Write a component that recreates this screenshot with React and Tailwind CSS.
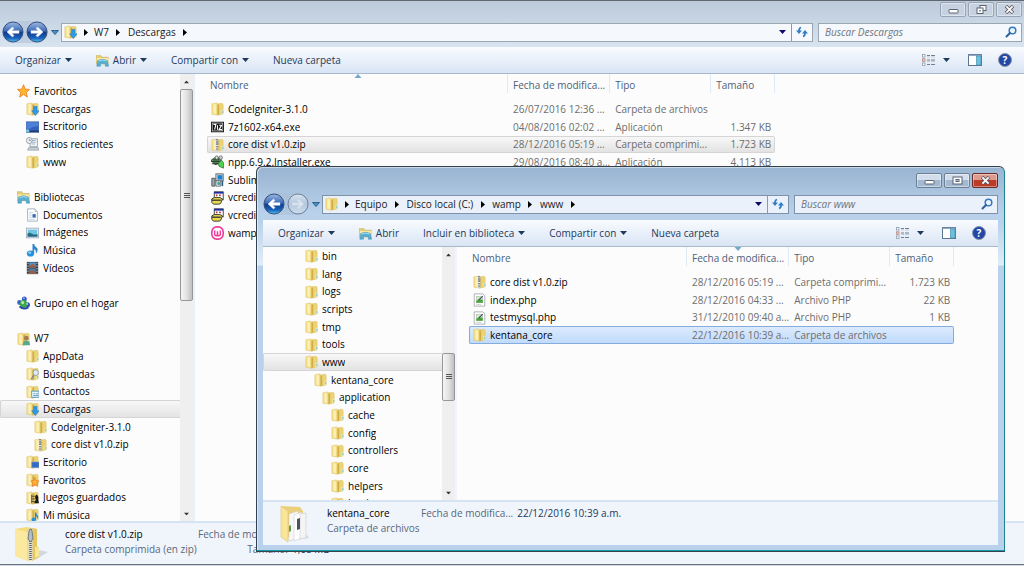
import { useState } from "react";

const icons = {
  folder: (
    <>
      <path d="M1 2 L7 1 L8 3 V15 L1 14 Z" fill="#f3dc84" stroke="#dcc06a" strokeWidth=".5" />
      <path d="M3 2 L6 3 V14 L3 13 Z" fill="#fbf0b8" />
      <path d="M8 2 L14 1.500 L15 3 V13 L14 14 L8 15 Z" fill="#ecd373" stroke="#d9bc60" strokeWidth=".5" />
      <path d="M8 3 L10 2.500 V14 L8 15 Z" fill="#cfae4a" />
      <path d="M13 9 H15.500 V14 H13 Z" fill="#eef0c6" />
      <path d="M14.500 10 V13" stroke="#4fa3a0" strokeWidth=".8" />
    </>
  ),
  star: (
    <path
      d="M8 .8 L10 5.800 L15.500 6.200 L11.400 9.700 L12.800 15 L8 12 L3.200 15 L4.600 9.700 L.5 6.200 L6 5.800 Z"
      fill="#ffb52c"
      stroke="#e8832a"
      strokeWidth="1"
    />
  ),
  desktop: (
    <>
      <rect x="0" y="2" width="16" height="12" fill="#3562bd" stroke="#6b86ac" strokeWidth=".8" />
      <path d="M.5 2.500 H15 V7 Q7 7 1 12 Z" fill="#5f96e6" opacity=".6" />
      <path d="M0 12 H16 V14 H0 Z" fill="#1d3c6f" />
      <rect x="0" y="11" width="4" height="3" fill="#76c1dd" />
    </>
  ),
  recent: (
    <>
      <path d="M5 2 H14 V11 H5 Z" fill="#f4f6f8" stroke="#8f9aa5" />
      <path d="M7 4 H12 M7 6 H12 M7 8 H11" stroke="#8ba8c4" />
      <path d="M3 12 H15 L16 15 H2 Z" fill="#c6cdd4" stroke="#8c969f" strokeWidth=".7" />
      <circle cx="4" cy="4" r="3.500" fill="#eff3f6" stroke="#8b949c" />
      <path d="M4 2 V4 H6" stroke="#53779a" fill="none" strokeWidth=".8" />
    </>
  ),
  library: (
    <>
      <path d="M0 2 H6 L7 4 H15 V12 H0 Z" fill="#e8cf73" stroke="#c6a94c" strokeWidth=".7" />
      <path d="M1 5 H15 L16 13 H1 Z" fill="#f8eba9" />
      <path d="M2 8 Q8 5 14 8 L15.500 15 H11.500 V12 H5.500 V15 H1 Z" fill="#58aed2" stroke="#3b8eb5" strokeWidth=".6" />
      <path d="M3 8.500 Q8 6.500 13 8.500" stroke="#bde6f3" fill="none" />
    </>
  ),
  document: (
    <>
      <path d="M2 1 H11 L14 4 V15 H2 Z" fill="#fff" stroke="#9aa8b5" />
      <path d="M11 1 V4 H14" fill="#dfe7ee" stroke="#9aa8b5" strokeWidth=".7" />
      <path d="M4 5 H9 M4 7 H7 M4 9 H7 M4 11 H7 M4 13 H11" stroke="#b0c4d9" strokeWidth=".8" />
      <rect x="8" y="7" width="4" height="4" fill="#3b6bb4" />
    </>
  ),
  picture: (
    <>
      <rect x=".5" y="2.500" width="15" height="11" fill="#fff" stroke="#9aa8b5" />
      <rect x="2" y="4" width="12" height="8" fill="#71c4e3" />
      <path d="M2 8 Q5 7 8 9 T14 9 V12 H2 Z" fill="#237c78" />
      <path d="M2 10 H14 V12 H2 Z" fill="#2d5f93" />
    </>
  ),
  music: (
    <>
      <ellipse cx="5.500" cy="12" rx="4.500" ry="3.500" fill="#2793dd" />
      <path d="M8 1 H10 Q10 4 14 6 Q15 10 12 12 Q13 8 10 7 V12 H8 Z" fill="#2b86cd" />
      <ellipse cx="4.500" cy="11" rx="2" ry="1.200" fill="#8dd3fa" />
    </>
  ),
  video: (
    <>
      <rect x="1" y="1" width="14" height="14" fill="#3a3f45" />
      <rect x="4" y="1.500" width="8" height="6" fill="#4e93c9" />
      <rect x="4" y="8.500" width="8" height="6" fill="#4c7fa8" />
      <path d="M4 6 L8 3 L12 6 V7.500 H4 Z M4 13 L7 10 L12 13 V14.500 H4 Z" fill="#a35b45" />
      <path d="M2.500 2 V15 M13.500 2 V15" stroke="#dbe5eb" strokeDasharray="1.500 1.500" />
    </>
  ),
  homegroup: (
    <>
      <circle cx="3" cy="7.500" r="2.800" fill="#3b63cf" />
      <circle cx="9" cy="3.500" r="3" fill="#2f58c5" />
      <circle cx="13" cy="10" r="3" fill="#3157bd" />
      <circle cx="8" cy="9" r="4.500" fill="#3da946" />
      <circle cx="7" cy="7.500" r="1.800" fill="#b8ecac" />
      <circle cx="12.500" cy="9" r="1.200" fill="#a9c3f8" />
      <circle cx="8.500" cy="2.500" r="1" fill="#a9c3f8" />
      <path d="M3 12 Q8 16 14 13" stroke="#2948a8" strokeWidth="2" fill="none" />
    </>
  ),
  sevenZip: (
    <>
      <rect x="0" y="2" width="16" height="12" fill="#111" />
      <rect x="1.500" y="3.500" width="13" height="9" fill="none" stroke="#e6e6e6" strokeWidth=".8" />
      <path d="M3 5 H6 L4.500 11 M8 6 V11 M10 6 H13 L10 11 H13.500" stroke="#fff" strokeWidth="1.400" fill="none" />
    </>
  ),
  npp: (
    <>
      <path d="M0 6 L5 3 L12 4 L12 9 L5 11 Z" fill="#568d5b" stroke="#29462d" />
      <path d="M0 7.500 H11 M1 10 H9 M3 5.500 H10" stroke="#202b20" />
      <circle cx="7" cy="3" r="2" fill="#d8dfd6" stroke="#444" strokeWidth=".8" />
      <circle cx="12" cy="3" r="2" fill="#d8dfd6" stroke="#444" strokeWidth=".8" />
      <path d="M9 9 L13 6 L15.500 9 V15 L10 13 Z" fill="#50d450" stroke="#26662c" strokeWidth=".8" />
    </>
  ),
  installer: (
    <>
      <rect x="6" y="1" width="9" height="8" fill="#d7dadf" stroke="#55585c" />
      <rect x="8" y="2.500" width="6" height="5" fill="#1683d1" />
      <path d="M1 6 H5 V15 H1 Z" fill="#9ba3ab" stroke="#4c5359" />
      <path d="M6 9 H12 V15 H6 Z" fill="#f2f2f2" stroke="#5d6266" />
      <circle cx="9.500" cy="12" r="2" fill="#39b09d" />
      <path d="M14 9 V15" stroke="#365a87" strokeWidth="2" />
    </>
  ),
  vcredist: (
    <>
      <rect x="4" y="1" width="11" height="9" fill="#fff" stroke="#222" />
      <path d="M4 2 H15" stroke="#1c2ca3" strokeWidth="2" />
      <path d="M6 5 H8 M10 5 H12" stroke="#b33" strokeWidth="2" />
      <path d="M1 9 L4 7.500 H11 L14 9 L12 14 L10 15 H3 L1 13 Z" fill="#e9d94c" stroke="#222" />
      <path d="M1 10.500 H12" stroke="#333" strokeWidth="1.500" />
    </>
  ),
  wamp: (
    <>
      <rect x="1" y="1" width="14" height="14" rx="6" fill="#fff" stroke="#ee3d9b" strokeWidth="2" />
      <path d="M4.500 5 V9 Q4.500 11 6.300 11 Q8 11 8 9 V6 V9 Q8 11 9.700 11 Q11.500 11 11.500 9 V5" stroke="#ee3d9b" strokeWidth="1.800" fill="none" />
    </>
  ),
  php: (
    <>
      <path d="M1.500 1 H12 L14.500 3 V15 H1.500 Z" fill="#fff" stroke="#a0a6ac" />
      <rect x="4" y="4" width="8" height="7" fill="#d9e9cf" stroke="#9eb58e" strokeWidth=".6" />
      <path d="M4 9 Q7 6 12 8 V11 H4 Z" fill="#4ba33d" />
      <path d="M7 8 L12 3.500" stroke="#3b4a6b" strokeWidth="1.200" />
      <path d="M4 13 H10" stroke="#b3b9bf" strokeWidth=".8" />
    </>
  ),
};

// small emblems drawn over the plain folder
const overlays = {
  zip: (
    <>
      <path d="M7.500 1 V15" stroke="#e9edf0" strokeWidth="3" />
      <path d="M7.500 1 V15" stroke="#5d666e" strokeWidth="2.500" strokeDasharray="1 1" />
      <rect x="6.500" y="3" width="2.500" height="4" fill="#8f9aa3" />
    </>
  ),
  downloads: <path d="M9.500 5 H13.500 V10 H16 L11.500 15.500 L7 10 H9.500 Z" fill="#2f9bea" stroke="#1b6fb8" strokeWidth=".6" />,
  user: (
    <>
      <circle cx="11.500" cy="7" r="2.800" fill="#a67a58" />
      <path d="M7 15 Q7 10 11.500 10 Q16 10 16 15 Z" fill="#5aa88e" />
    </>
  ),
  search: (
    <>
      <path d="M10 9 L6.500 14" stroke="#7f8a94" strokeWidth="1.800" />
      <circle cx="12" cy="6.500" r="3.300" fill="#d9ecf7" stroke="#8b98a3" />
    </>
  ),
  contacts: (
    <>
      <rect x="7" y="7" width="9" height="7" fill="#eaf5fb" stroke="#4d95bd" />
      <path d="M9 10 H11 M12 10 H15 M9 12 H15" stroke="#4d95bd" />
    </>
  ),
  desktop: <path d="M7 8 H16 V14.500 H7 Z" fill="#3169c3" stroke="#7d9cc4" strokeWidth=".8" />,
  star: <path d="M11 5 L12.500 8.500 L16 9 L13.500 11.500 L14.500 15.500 L11 13.500 L7.500 15.500 L8.500 11.500 L6 9 L9.500 8.500 Z" fill="#ffae2d" stroke="#e36d2a" strokeWidth=".7" />,
  games: (
    <>
      <path d="M7 4 V14 M7 6 H11 M7 9 H11 M7 12 H11" stroke="#4a4630" />
      <path d="M13 4 Q16 6 15 10 L16 14 H10 L12 10 Q10 6 13 4 Z" fill="#16181c" />
    </>
  ),
  music: (
    <>
      <ellipse cx="9.500" cy="13" rx="2.700" ry="2.200" fill="#2793dd" />
      <path d="M11 5 H12.500 Q13 8 15 9 Q15.500 11 14 12 Q14 10 12.500 9.500 V13 H11 Z" fill="#2b86cd" />
    </>
  ),
};

function Icon({ name, overlay, className = "h-3.5 w-[13px]" }) {
  return (
    <svg viewBox="0 0 16 16" preserveAspectRatio="none" className={`shrink-0 ${className}`} aria-hidden="true">
      {icons[name] || icons.folder}
      {overlay && overlays[overlay]}
    </svg>
  );
}

function Caret({ className = "text-[#1e395b]" }) {
  return (
    <svg viewBox="0 0 7 4" className={`h-1 w-[7px] shrink-0 ${className}`} aria-hidden="true">
      <path d="M0 0 H7 L3.500 4 Z" fill="currentColor" />
    </svg>
  );
}

function NavButton({ label, forward, disabled }) {
  return (
    <button type="button" aria-label={label} disabled={disabled} className="h-[22px] w-[22px]">
      <svg viewBox="0 0 22 22" className="h-full w-full">
        <defs>
          <linearGradient id="navOn" x1="0" y1="0" x2="0" y2="1">
            <stop offset="0" stopColor="#9db9e2" />
            <stop offset=".46" stopColor="#3a69b4" />
            <stop offset=".5" stopColor="#0f3a88" />
            <stop offset=".8" stopColor="#1a62bd" />
            <stop offset="1" stopColor="#4fc6f3" />
          </linearGradient>
          <linearGradient id="navOff" x1="0" y1="0" x2="0" y2="1">
            <stop offset="0" stopColor="#d7e3f0" />
            <stop offset=".5" stopColor="#b4c7dd" />
            <stop offset="1" stopColor="#cfdeee" />
          </linearGradient>
        </defs>
        <circle cx="11" cy="11" r="10" fill={disabled ? "url(#navOff)" : "url(#navOn)"} stroke={disabled ? "#71849b" : "#35507f"} strokeWidth="1" />
        <g transform={forward ? "rotate(180 11 11)" : undefined}>
          <path
            d="M5 11 L10.500 6 L12 7.500 L9.800 9.700 H17 V12.300 H9.800 L12 14.500 L10.500 16 Z"
            fill={disabled ? "#dbe5f0" : "#fff"}
            stroke={disabled ? "#c2d0e0" : "#dfe9f6"}
            strokeWidth=".5"
          />
        </g>
      </svg>
    </button>
  );
}

function WindowButtons({ active }) {
  const look = active
    ? "border-[#6c7f95] bg-linear-to-b from-[#d2deeb] from-45% to-[#a3b9d1] to-50%"
    : "border-[#98a4b3] bg-[#c6d2e0]";
  const close = active ? "border-[#692a2c] bg-linear-to-b from-[#dc9b8e] from-45% to-[#bd3b25] to-50%" : look;
  const base = "flex h-[15px] w-[26px] items-center justify-center rounded-xs border shadow-[inset_0_0_0_1px_rgba(255,255,255,0.4)]";
  return (
    <div className="flex justify-end gap-0.5">
      <button type="button" aria-label="Minimizar" className={`${base} ${look}`}>
        <svg viewBox="0 0 11 9" className="h-[9px] w-[11px]">
          <rect x="1" y="4.500" width="9" height="3.500" rx=".5" fill="#fff" stroke="#5b6270" />
        </svg>
      </button>
      <button type="button" aria-label="Restaurar" className={`${base} ${look}`}>
        <svg viewBox="0 0 11 9" className="h-[9px] w-[11px]">
          {active ? (
            <>
              <rect x="1" y="1" width="9" height="7" fill="#fff" stroke="#5b6270" />
              <rect x="4" y="3.500" width="3" height="2" fill="#a3b9d1" stroke="#5b6270" />
            </>
          ) : (
            <>
              <rect x="4" y=".5" width="6" height="5" fill="#fff" stroke="#5b6270" />
              <rect x="1" y="3" width="6" height="5.500" fill="#fff" stroke="#5b6270" />
              <rect x="3" y="5" width="2" height="1.500" fill="#8995a5" />
            </>
          )}
        </svg>
      </button>
      <button type="button" aria-label="Cerrar" className={`${base} ${close}`}>
        <svg viewBox="0 0 11 9" className="h-[9px] w-[11px]">
          <path d="M2 1 L9 8 M9 1 L2 8" stroke="#5b5460" strokeWidth="3.400" />
          <path d="M2.400 1.400 L8.600 7.600 M8.600 1.400 L2.400 7.600" stroke="#fff" strokeWidth="1.800" />
        </svg>
      </button>
    </div>
  );
}

function Arrow() {
  return (
    <svg viewBox="0 0 4 7" className="h-[7px] w-1" aria-hidden="true">
      <path d="M0 0 L4 3.500 L0 7 Z" fill="#000" />
    </svg>
  );
}

function AddressBar({ path, overlay, placeholder, active }) {
  const [query, setQuery] = useState("");
  const box = active ? "border-[#7f92a8] bg-[#eaf1fa]" : "border-[#9ba6b2] bg-[#f5f8fc]";
  return (
    <div className="flex items-center">
      <div className="flex items-center gap-0.5 rounded-full bg-[#a9bdd4]/50">
        <NavButton label="Atrás" />
        <NavButton label="Adelante" forward disabled={active} />
      </div>
      <button type="button" aria-label="Ubicaciones recientes" className="flex h-[18px] w-[13px] items-center justify-center">
        <svg viewBox="0 0 8 5" className="h-[5px] w-2">
          <path d="M.5 .5 H7.500 L4 4.500 Z" fill="#3f95c9" stroke="#1f4f7d" strokeWidth=".8" />
        </svg>
      </button>
      <div className={`flex h-[19px] min-w-0 flex-1 items-center border pl-0.5 ${box}`}>
        <Icon name="folder" overlay={overlay} />
        <ol className="flex items-center">
          <li className="flex w-[17px] justify-center">
            <Arrow />
          </li>
          {path.map((p) => (
            <li key={p} className="flex items-center">
              <button type="button">{p}</button>
              <span className="flex w-[19px] justify-center">
                <Arrow />
              </span>
            </li>
          ))}
        </ol>
        <button type="button" aria-label="Ubicaciones anteriores" className="ml-auto flex h-full w-[17px] items-center justify-center">
          <Caret className="text-[#0b0b6b]" />
        </button>
        <button type="button" aria-label="Actualizar" className="flex h-full w-[21px] items-center justify-center border-l border-[#8e9aa8]">
          <svg viewBox="0 0 12 12" className="h-3 w-3">
            <path d="M5 1.500 Q3 2 3 5 M7 10.500 Q9 10 9 7" stroke="#2f7fc6" strokeWidth="1.800" fill="none" />
            <path d="M0 4.500 H6 L3 8 Z M6 7.500 H12 L9 4 Z" fill="#2f7fc6" />
          </svg>
        </button>
      </div>
      <label className={`ml-[5px] flex h-[19px] w-[204px] items-center border pr-1 pl-1.5 ${box}`}>
        <input
          type="search"
          aria-label={placeholder}
          placeholder={placeholder}
          value={query}
          onChange={(e) => setQuery(e.target.value)}
          className="w-full min-w-0 bg-transparent outline-none placeholder:text-[#6f757c] placeholder:italic"
        />
        <svg viewBox="0 0 12 12" className="h-3 w-3 shrink-0" aria-hidden="true">
          <circle cx="7.500" cy="4.500" r="3.300" fill="#e8f3fc" stroke="#3579bd" strokeWidth="1.500" />
          <path d="M5 7 L1.500 10.500" stroke="#2c5f9d" strokeWidth="2" strokeLinecap="round" />
        </svg>
      </label>
    </div>
  );
}

function Toolbar({ items }) {
  return (
    <div className="flex h-[27px] shrink-0 items-center gap-6 border-b border-[#a9b9cc] bg-linear-to-b from-[#f9fbfe] via-[#e9f0fa] to-[#d9e5f4] pr-3 pl-[15px] text-[#1e395b]">
      {items.map((item) => (
        <button key={item.label} type="button" className="flex items-center whitespace-nowrap">
          {item.icon && <Icon name={item.icon} className="mr-1 h-[13px] w-[13px]" />}
          {item.label}
          {item.menu && <Caret className="ml-1 text-[#1e395b]" />}
        </button>
      ))}
      <div className="ml-auto flex items-center">
        <button type="button" aria-label="Cambiar la vista" className="flex items-center gap-2">
          <svg viewBox="0 0 13 12" className="h-3 w-[13px]">
            <path d="M5 1.500 H8 M9 1.500 H13 M5 6 H8 M9 6 H13 M5 10.500 H8 M9 10.500 H13" stroke="#6e7f92" />
            <path d="M5 3 H8 M9 3 H13 M5 7.500 H8 M9 7.500 H13" stroke="#c2ccd7" />
            <rect x=".5" y=".5" width="2.500" height="2.500" fill="#fff" stroke="#8d9cac" strokeWidth=".8" />
            <rect x=".5" y="4.800" width="2.500" height="2.500" fill="#f0c9bf" stroke="#b08b83" strokeWidth=".8" />
            <rect x=".5" y="9" width="2.500" height="2.500" fill="#fff" stroke="#8d9cac" strokeWidth=".8" />
          </svg>
          <Caret />
        </button>
        <button type="button" aria-label="Panel de vista previa" className="ml-[18px]">
          <svg viewBox="0 0 14 12" className="h-3 w-3.5">
            <rect x=".5" y=".5" width="13" height="11" fill="#fff" stroke="#5b7490" />
            <path d="M0 1 H14" stroke="#6f8aa7" strokeWidth="1.500" />
            <rect x="8.500" y="2" width="4.500" height="9" fill="#6cc2dc" stroke="#4a92b4" strokeWidth=".7" />
          </svg>
        </button>
        <button type="button" aria-label="Ayuda" className="ml-4 flex h-3.5 w-3.5 items-center justify-center rounded-full border border-[#8b94a6] bg-[#2347a6] text-[10px] leading-none font-bold text-white">
          ?
        </button>
      </div>
    </div>
  );
}

const indents = ["pl-4", "pl-[25px]", "pl-[33px]", "pl-[41px]", "pl-[50px]", "pl-[58px]", "pl-[67px]"];

function Tree({ nodes }) {
  return (
    <ul className="min-w-0 flex-1 overflow-hidden">
      {nodes.map((n, i) => (
        <li key={i} className="h-[18px] nth-[3n]:h-[17px]">
          {n && (
            <a
              href="#"
              className={`flex h-full items-center gap-1 rounded-l-xs border border-r-0 text-black ${indents[n.level]} ${
                n.selected ? "border-[#d5d5d5] bg-linear-to-b from-[#f8f8f8] to-[#e3e3e3]" : "border-transparent"
              }`}
            >
              <Icon name={n.icon} overlay={n.overlay} />
              <span className="truncate">{n.label}</span>
            </a>
          )}
        </li>
      ))}
    </ul>
  );
}

function Scrollbar({ thumb }) {
  return (
    <div className="flex w-[13px] shrink-0 flex-col bg-[#efefef]">
      <button type="button" aria-label="Subir" className="flex h-[15px] items-center justify-center">
        <Caret className="rotate-180 scale-75 text-[#333]" />
      </button>
      <div className="flex flex-1 flex-col">
        <div className={thumb.before} />
        <div className={`flex flex-col items-center justify-center gap-px rounded-xs border border-[#979797] bg-linear-to-r from-[#f5f5f5] via-[#e3e3e3] to-[#bfbfbf] ${thumb.size}`}>
          <i className="h-px w-1.5 bg-[#555]" />
          <i className="h-px w-1.5 bg-[#555]" />
          <i className="h-px w-1.5 bg-[#555]" />
        </div>
        <div className={thumb.after} />
      </div>
      <button type="button" aria-label="Bajar" className="flex h-[15px] items-center justify-center">
        <Caret className="scale-75 text-[#333]" />
      </button>
    </div>
  );
}

function FileTable({ files, widths, sort, descending }) {
  const cols = ["Nombre", "Fecha de modifica...", "Tipo", "Tamaño"];
  const tones = {
    gray: "border-[#d5d5d5] bg-linear-to-b from-[#f8f8f8] to-[#e2e2e2]",
    blue: "border-[#84acdd] bg-linear-to-b from-[#dceafc] to-[#c1dbfc]",
  };
  return (
    <table className="table-fixed border-separate border-spacing-0 self-start text-[#6d6d6d]">
      <colgroup>
        {widths.map((w, i) => (
          <col key={i} className={w} />
        ))}
      </colgroup>
      <thead>
        <tr className="h-[26px] text-left align-top text-[#4c607a]">
          {cols.map((c, i) => (
            <th key={c} scope="col" className="relative p-0 font-normal">
              <div className={`flex h-[19px] items-end border-r border-[#dfeaf6] ${i === 0 ? "pl-[3px]" : "pl-[5px]"}`}>{c}</div>
              {sort === i && (
                <Caret className={`absolute top-0 left-1/2 -translate-x-1/2 text-[#6fa9cc] ${descending ? "" : "rotate-180"}`} />
              )}
            </th>
          ))}
        </tr>
      </thead>
      <tbody>
        {files.map((f, i) => {
          const tone = f.selected ? tones[f.selected] : "border-transparent";
          return (
            <tr key={i} className="h-[18px] nth-[3n]:h-[17px]">
              <td className={`rounded-l-xs border-y border-l p-0 pl-[3px] ${tone}`}>
                <div className="flex items-center gap-1 text-black">
                  <Icon name={f.icon} overlay={f.overlay} />
                  <span className="truncate">{f.name}</span>
                </div>
              </td>
              <td className={`border-y p-0 pl-[5px] ${tone}`}>{f.date}</td>
              <td className={`border-y p-0 pl-[5px] ${tone}`}>{f.type}</td>
              <td className={`rounded-r-xs border-y border-r p-0 pr-[3px] text-right ${tone}`}>{f.size}</td>
            </tr>
          );
        })}
      </tbody>
    </table>
  );
}

const treeMain = [
  { label: "Favoritos", level: 0, icon: "star" },
  { label: "Descargas", level: 1, overlay: "downloads" },
  { label: "Escritorio", level: 1, icon: "desktop" },
  { label: "Sitios recientes", level: 1, icon: "recent" },
  { label: "www", level: 1 },
  null,
  { label: "Bibliotecas", level: 0, icon: "library" },
  { label: "Documentos", level: 1, icon: "document" },
  { label: "Imágenes", level: 1, icon: "picture" },
  { label: "Música", level: 1, icon: "music" },
  { label: "Vídeos", level: 1, icon: "video" },
  null,
  { label: "Grupo en el hogar", level: 0, icon: "homegroup" },
  null,
  { label: "W7", level: 0, overlay: "user" },
  { label: "AppData", level: 1 },
  { label: "Búsquedas", level: 1, overlay: "search" },
  { label: "Contactos", level: 1, overlay: "contacts" },
  { label: "Descargas", level: 1, overlay: "downloads", selected: true },
  { label: "CodeIgniter-3.1.0", level: 2 },
  { label: "core dist v1.0.zip", level: 2, overlay: "zip" },
  { label: "Escritorio", level: 1, overlay: "desktop" },
  { label: "Favoritos", level: 1, overlay: "star" },
  { label: "Juegos guardados", level: 1, overlay: "games" },
  { label: "Mi música", level: 1, overlay: "music" },
];

const treeWww = [
  { label: "bin", level: 3 },
  { label: "lang", level: 3 },
  { label: "logs", level: 3 },
  { label: "scripts", level: 3 },
  { label: "tmp", level: 3 },
  { label: "tools", level: 3 },
  { label: "www", level: 3, selected: true },
  { label: "kentana_core", level: 4 },
  { label: "application", level: 5 },
  { label: "cache", level: 6 },
  { label: "config", level: 6 },
  { label: "controllers", level: 6 },
  { label: "core", level: 6 },
  { label: "helpers", level: 6 },
  { label: "hooks", level: 6 },
];

const filesMain = [
  { name: "CodeIgniter-3.1.0", date: "26/07/2016 12:36 ...", type: "Carpeta de archivos" },
  { name: "7z1602-x64.exe", icon: "sevenZip", date: "04/08/2016 02:02 ...", type: "Aplicación", size: "1.347 KB" },
  { name: "core dist v1.0.zip", overlay: "zip", date: "28/12/2016 05:19 ...", type: "Carpeta comprimi...", size: "1.723 KB", selected: "gray" },
  { name: "npp.6.9.2.Installer.exe", icon: "npp", date: "29/08/2016 08:40 a...", type: "Aplicación", size: "4.113 KB" },
  { name: "Sublim", icon: "installer" },
  { name: "vcredis", icon: "vcredist" },
  { name: "vcredis", icon: "vcredist" },
  { name: "wamp", icon: "wamp" },
];

const filesWww = [
  { name: "core dist v1.0.zip", overlay: "zip", date: "28/12/2016 05:19 ...", type: "Carpeta comprimi...", size: "1.723 KB" },
  { name: "index.php", icon: "php", date: "28/12/2016 04:33 ...", type: "Archivo PHP", size: "22 KB" },
  { name: "testmysql.php", icon: "php", date: "31/12/2010 09:40 a...", type: "Archivo PHP", size: "1 KB" },
  { name: "kentana_core", date: "22/12/2016 10:39 a...", type: "Carpeta de archivos", selected: "blue" },
];

function ZipLarge() {
  return (
    <svg viewBox="0 0 33 36" className="h-9 w-[33px] shrink-0" aria-hidden="true">
      <path d="M20 34 L33 26 L24 24 Z" fill="#d3d8df" />
      <path d="M0 3 L12 1 L22 3 V32 L14 35 L0 30 Z" fill="#f4dc7c" />
      <path d="M0 3 L12 6 V35 L0 30 Z" fill="#fae99f" />
      <path d="M16 2 L22 3 V20 L24 22 V31 L17 35 Z" fill="#e5c75c" />
      <path d="M20 21 Q24 20 24 24 V30 L20 32 Z" fill="#f7e59b" />
      <path d="M15.500 3 V34" stroke="#d8dde2" strokeWidth="4" />
      <path d="M15.500 3 V34" stroke="#5f666d" strokeWidth="2.500" strokeDasharray="1 1" />
      <path d="M14 5 Q15.500 1 17 5 L18 13 L15.500 16 L13 13 Z" fill="#b5bec6" stroke="#5f6a74" strokeWidth=".8" />
    </svg>
  );
}

function FolderLarge() {
  return (
    <svg viewBox="0 0 30 38" className="h-[38px] w-[30px] shrink-0" aria-hidden="true">
      <path d="M8 36 L29 33 L27 30 Z" fill="#d7dbe1" />
      <path d="M1 1 L20 2 L23 6 V30 L8 32 Z" fill="#ead07a" />
      <path d="M9 9 L18 6 V33 L9 36 Z" fill="#f7f7f7" stroke="#c9ccd0" strokeWidth=".5" />
      <path d="M14 10 L22 7 V33 L14 36 Z" fill="#fff" stroke="#c2c5c9" strokeWidth=".5" />
      <path d="M20 9 L26 8 V33 L20 34 Z" fill="#f4f4f4" stroke="#c2c5c9" strokeWidth=".5" />
      <path d="M17 14 L20 13 V24 L17 25 Z" fill="#4d5358" />
      <path d="M9 21 L11 20 V26 L9 27 Z" fill="#67a04b" />
      <path d="M1 1 L8 6 V37 L1 32 Z" fill="#f8e596" stroke="#dfc56b" strokeWidth=".6" />
    </svg>
  );
}

function MainWindow() {
  return (
    <div className="flex min-h-0 flex-1 flex-col border-t border-[#5f6770] bg-linear-to-b from-[#bccada] to-[#d8e4f0] to-[46px]">
      <header className="shrink-0 px-0.5 pt-px pb-1">
        <WindowButtons />
        <div className="pt-1">
          <AddressBar path={["W7", "Descargas"]} overlay="downloads" placeholder="Buscar Descargas" />
        </div>
      </header>
      <Toolbar
        items={[
          { label: "Organizar", menu: true },
          { label: "Abrir", icon: "library", menu: true },
          { label: "Compartir con", menu: true },
          { label: "Nueva carpeta" },
        ]}
      />
      <div className="flex min-h-0 flex-1 bg-[#fcfcfc]">
        <nav className="flex w-[195px] shrink-0 border-r-2 border-[#e9f0f9]">
          <div className="flex min-w-0 flex-1 overflow-hidden pt-2">
            <Tree nodes={treeMain} />
          </div>
          <Scrollbar thumb={{ before: "grow-0", size: "grow-[50]", after: "grow-[50]" }} />
        </nav>
        <main className="flex min-w-0 flex-1 overflow-hidden pl-3">
          <FileTable files={filesMain} widths={["w-[301px]", "w-[101px]", "w-[101px]", "w-16"]} sort={0} />
        </main>
      </div>
      <footer className="flex h-[43px] shrink-0 items-start border-t-2 border-[#d6e3f2] bg-[#f0f5fc] pt-[3px] pl-[15px]">
        <ZipLarge />
        <div className="ml-[17px] w-[133px]">
          <p className="leading-4 text-black">core dist v1.0.zip</p>
          <p className="text-[#5a6779]">Carpeta comprimida (en zip)</p>
        </div>
        <dl className="grid grid-cols-[90px_auto] gap-x-1 text-[#1e395b]">
          <dt className="leading-4 text-[#5a6779]">Fecha de modifica...</dt>
          <dd className="leading-4" />
          <dt className="text-right text-[#5a6779]">Tamaño:</dt>
          <dd>1,68 MB</dd>
        </dl>
      </footer>
    </div>
  );
}

function WwwWindow() {
  return (
    <div className="absolute top-[166px] right-[19px] bottom-[15px] left-[256px] flex flex-col rounded-t-md border border-[#33404d] border-r-[#1e8494] border-b-[#159aa8] bg-[linear-gradient(#99b4d1,#b9d1ea_46px,#b9d1ea_55px,#e1edf8_98px,#b9d1ea_99px)] px-1.5 pb-[5px] shadow-[0_1px_0_#35424c,inset_1px_1px_0_rgba(255,255,255,0.5)]">
      <header className="shrink-0 pt-1.5 pb-[5px]">
        <WindowButtons active />
        <div className="pt-[5px]">
          <AddressBar path={["Equipo", "Disco local (C:)", "wamp", "www"]} placeholder="Buscar www" active />
        </div>
      </header>
      <Toolbar
        items={[
          { label: "Organizar", menu: true },
          { label: "Abrir", icon: "library" },
          { label: "Incluir en biblioteca", menu: true },
          { label: "Compartir con", menu: true },
          { label: "Nueva carpeta" },
        ]}
      />
      <div className="flex min-h-0 flex-1 bg-[#fcfcfc]">
        <nav className="flex w-[194px] shrink-0 overflow-hidden border-r-2 border-[#f0f5fb]">
          <Tree nodes={treeWww} />
          <Scrollbar thumb={{ before: "grow-[42]", size: "grow-[19]", after: "grow-[39]" }} />
        </nav>
        <main className="flex min-w-0 flex-1 overflow-hidden pl-3">
          <FileTable files={filesWww} widths={["w-[218px]", "w-[101px]", "w-[101px]", "w-16"]} sort={1} descending />
        </main>
      </div>
      <footer className="flex h-[45px] shrink-0 items-start border-t-2 border-[#d6e3f2] bg-[#f0f5fc] pt-[3px] pl-[17px]">
        <FolderLarge />
        <div className="ml-[17px] w-[94px]">
          <p className="leading-4 text-black">kentana_core</p>
          <p className="text-[#5a6779]">Carpeta de archivos</p>
        </div>
        <dl className="flex gap-1 leading-4">
          <dt className="text-[#5a6779]">Fecha de modifica...</dt>
          <dd className="text-[#1e395b]">22/12/2016 10:39 a.m.</dd>
        </dl>
      </footer>
    </div>
  );
}

export default function App() {
  return (
    <div className="relative flex h-screen flex-col overflow-hidden font-['Open_Sans','Noto_Sans',sans-serif] text-[10px] leading-[15px] whitespace-nowrap text-[#1a1a1a]">
      <MainWindow />
      <div className="h-0.5 shrink-0 border-t border-[#68747f] bg-[#cfd8e2]" />
      <WwwWindow />
    </div>
  );
}
